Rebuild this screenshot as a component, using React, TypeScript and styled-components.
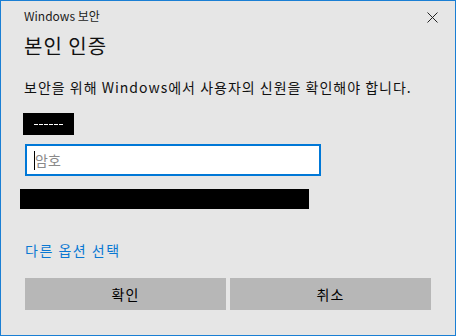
import styled, { createGlobalStyle } from "styled-components";

const GlobalStyle = createGlobalStyle`
  html, body {
    margin: 0;
    padding: 0;
    background: #e6e6e6;
  }
  * {
    box-sizing: border-box;
  }
`;

const FONT = `"Segoe UI", "Noto Sans CJK KR", "Noto Sans", sans-serif`;

const Window = styled.div`
  width: 456px;
  height: 336px;
  background: #e6e6e6;
  border: 1px solid #1a7fd4;
  font-family: ${FONT};
  color: #000;
  display: flex;
  flex-direction: column;
`;

const TitleBar = styled.div`
  height: 30px;
  display: flex;
  align-items: center;
  justify-content: space-between;
  padding: 0 0 0 23px;
`;

const Caption = styled.span`
  font-size: 12px;
  color: #1b1b1b;
  margin-top: -1px;
`;

const CloseBtn = styled.button`
  width: 46px;
  height: 30px;
  border: none;
  background: transparent;
  display: flex;
  align-items: center;
  justify-content: center;
  padding: 0;
  margin-top: 2px;
`;

const Body = styled.div`
  padding: 0 0 0 23px;
  display: flex;
  flex-direction: column;
`;

const Heading = styled.h1`
  margin: 1px 0 0;
  font-size: 20px;
  font-weight: 400;
  line-height: 28px;
  letter-spacing: 1px;
  color: #111;
`;

const Message = styled.p`
  margin: 17px 0 0;
  font-size: 14px;
  line-height: 20px;
  letter-spacing: 1px;
  color: #111;
`;

const Redacted = styled.div<{ w: number; h: number; left: number }>`
  width: ${p => p.w}px;
  height: ${p => p.h}px;
  margin-left: ${p => p.left}px;
  background: #000;
  display: flex;
  align-items: center;
  justify-content: center;
`;

const Dashes = styled.div`
  width: 30px;
  height: 1px;
  background: repeating-linear-gradient(90deg, #fff 0 4px, #000 4px 5px);
`;

const Field = styled.div`
  position: relative;
  width: 296px;
  margin-left: 1px;
`;

const Input = styled.input`
  width: 296px;
  height: 32px;
  border: 2px solid #0078d7;
  background: #fff;
  padding: 0 8px;
  font-family: ${FONT};
  font-size: 14px;
  color: #000;
  outline: none;
  caret-color: transparent;
  &::placeholder {
    color: #8a8a8a;
  }
`;

const Caret = styled.span`
  position: absolute;
  left: 9px;
  top: 7px;
  width: 1px;
  height: 19px;
  background: #000;
`;

const Link = styled.a`
  margin: 31px 0 0 1px;
  font-size: 14px;
  color: #0a78d2;
  text-decoration: none;
  line-height: 20px;
  letter-spacing: 1.5px;
`;

const Buttons = styled.div`
  display: flex;
  gap: 4px;
  margin: 18px 0 0 1px;
`;

const Btn = styled.button`
  width: 201px;
  height: 32px;
  border: none;
  background: #b7b7b7;
  font-family: ${FONT};
  font-size: 14px;
  letter-spacing: 1px;
  color: #000;
  padding: 0;
`;

const App = () => {
  return (
    <>
      <GlobalStyle />
      <Window>
        <TitleBar>
          <Caption>Windows 보안</Caption>
          <CloseBtn aria-label="닫기">
            <svg width="11" height="11" viewBox="0 0 11 11">
              <path d="M0.5 0.5 L10.5 10.5 M10.5 0.5 L0.5 10.5" stroke="#222" strokeWidth="1" />
            </svg>
          </CloseBtn>
        </TitleBar>
        <Body>
          <Heading>본인 인증</Heading>
          <Message>보안을 위해 Windows에서 사용자의 신원을 확인해야 합니다.</Message>
          <div style={{ marginTop: 16 }}>
            <Redacted w={51} h={22} left={-1}>
              <Dashes />
            </Redacted>
          </div>
          <div style={{ marginTop: 9 }}>
            <Field>
              <Input placeholder="암호" />
              <Caret />
            </Field>
          </div>
          <div style={{ marginTop: 13 }}>
            <Redacted w={289} h={20} left={-4} />
          </div>
          <Link href="#">다른 옵션 선택</Link>
          <Buttons>
            <Btn>확인</Btn>
            <Btn>취소</Btn>
          </Buttons>
        </Body>
      </Window>
    </>
  );
};

export default App;
